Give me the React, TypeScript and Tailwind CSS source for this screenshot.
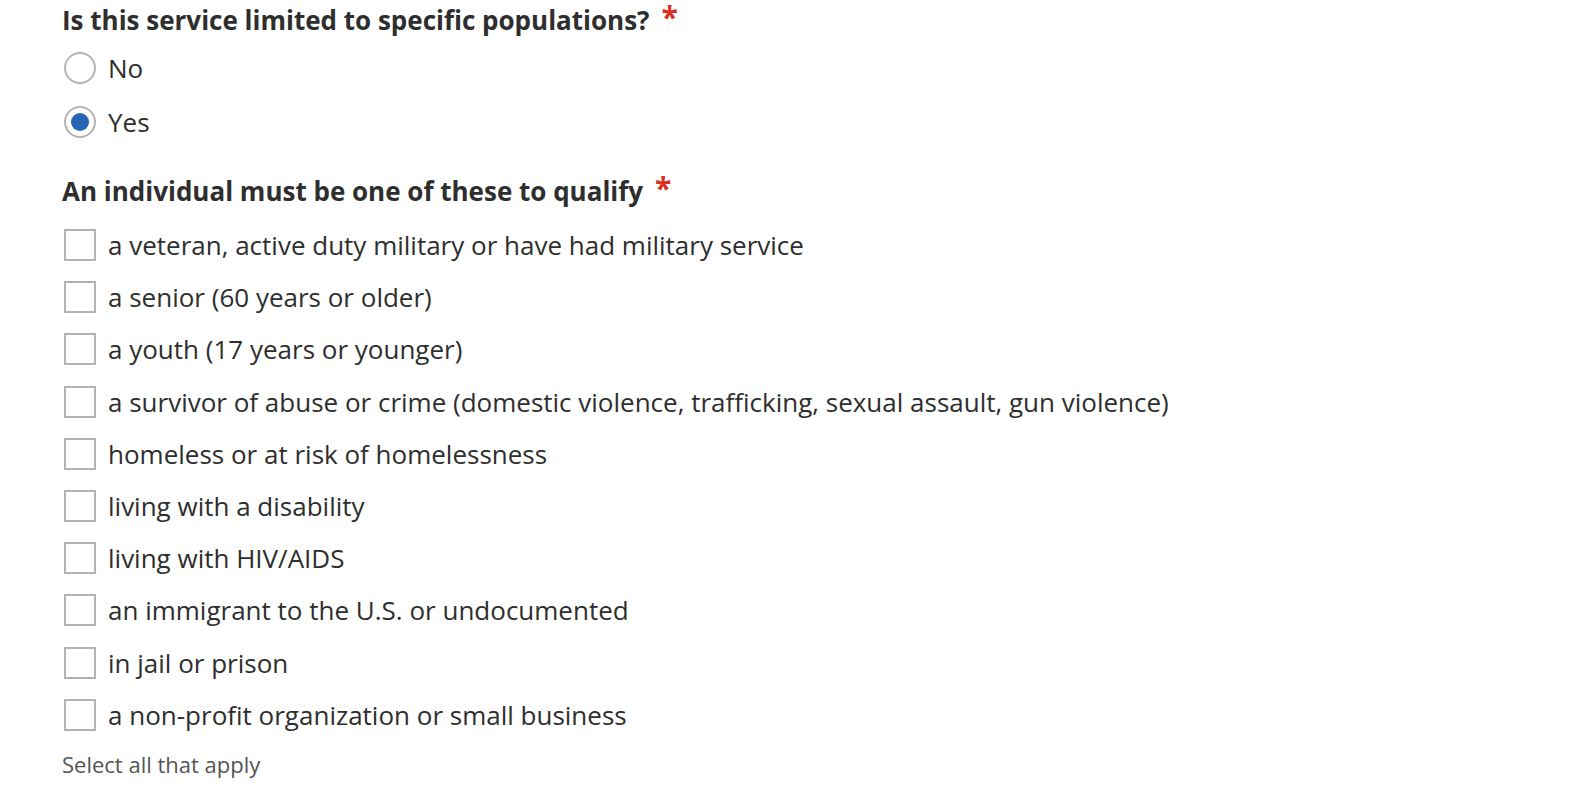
import React from 'react';

const options: string[] = [
  'a veteran, active duty military or have had military service',
  'a senior (60 years or older)',
  'a youth (17 years or younger)',
  'a survivor of abuse or crime (domestic violence, trafficking, sexual assault, gun violence)',
  'homeless or at risk of homelessness',
  'living with a disability',
  'living with HIV/AIDS',
  'an immigrant to the U.S. or undocumented',
  'in jail or prison',
  'a non-profit organization or small business',
];

const Required: React.FC = () => (
  <span className="ml-[12px] text-[30px] font-bold leading-[28px] text-[#d93025]">*</span>
);

const App: React.FC = () => {
  return (
    <div
      className="min-h-screen bg-white pl-[62px] pt-[3px] text-[#2e2e2e]"
      style={{ fontFamily: '"Open Sans", sans-serif' }}
    >
      <div className="flex items-start h-[34px]">
        <h2 className="text-[26px] font-bold leading-[34px]">Is this service limited to specific populations?</h2>
        <Required />
      </div>

      <div className="mt-[15px] flex flex-col gap-[22px]">
        {[
          { label: 'No', checked: false },
          { label: 'Yes', checked: true },
        ].map(r => (
          <label key={r.label} className="flex items-center h-[32px] ml-[2px]">
            <span className="w-[32px] h-[32px] rounded-full border-2 border-[#b3b3b3] flex items-center justify-center bg-white shrink-0">
              {r.checked && <span className="w-[18px] h-[18px] rounded-full bg-[#2a64b6]" />}
            </span>
            <span className="ml-[12px] text-[26px] leading-none">{r.label}</span>
          </label>
        ))}
      </div>

      <div className="mt-[36px] flex items-start h-[34px]">
        <h2 className="text-[26px] font-bold leading-[34px]">An individual must be one of these to qualify</h2>
        <Required />
      </div>

      <div className="mt-[21px] flex flex-col gap-[20.2px]">
        {options.map(opt => (
          <label key={opt} className="flex items-center h-[32px] ml-[2px]">
            <span className="w-[32px] h-[32px] border-2 border-[#b3b3b3] bg-white shrink-0" />
            <span className="ml-[12px] text-[26px] leading-none">{opt}</span>
          </label>
        ))}
      </div>

      <p className="mt-[18px] text-[22px] leading-[30px] text-[#555]">Select all that apply</p>
    </div>
  );
};

export default App;
